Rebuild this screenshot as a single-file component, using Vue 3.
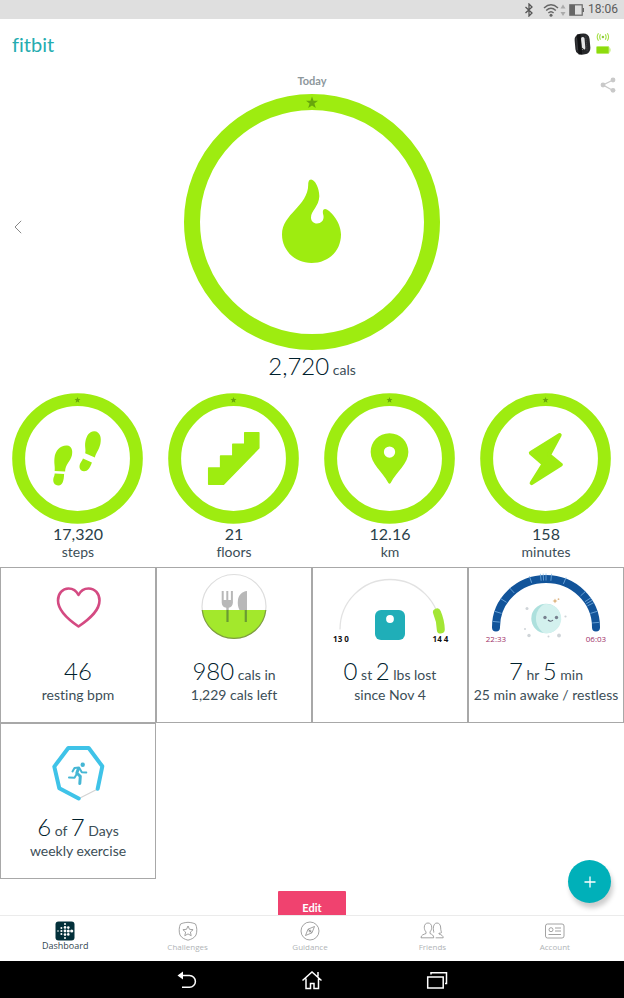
<script setup>
const goals = [
  { id: 'steps', value: '17,320', unit: 'steps' },
  { id: 'floors', value: '21', unit: 'floors' },
  { id: 'km', value: '12.16', unit: 'km' },
  { id: 'minutes', value: '158', unit: 'minutes' }
]

const tiles = [
  { id: 'heart', main: [['46', '']], sub: 'resting bpm' },
  { id: 'food', main: [['980', 'cals in']], sub: '1,229 cals left' },
  { id: 'weight', main: [['0', 'st'], ['2', 'lbs lost']], sub: 'since Nov 4' },
  { id: 'sleep', main: [['7', 'hr'], ['5', 'min']], sub: '25 min awake / restless' },
  { id: 'exercise', main: [['6', 'of'], ['7', 'Days']], sub: 'weekly exercise' }
]

const tabs = ['Dashboard', 'Challenges', 'Guidance', 'Friends', 'Account']

// Restless moments along the sleep arc, in degrees from its left end
const restless = [6, 17, 32, 47, 72, 84, 87, 90, 96, 112, 138, 147, 150, 153, 163, 175]

// Dots of the brand mark: [x, y, radius]
const dots = [
  [10, 3, 1], [10, 17, 1], [3, 10, 0.8],
  [6.4, 7, 1], [6.4, 10, 1.1], [6.4, 13, 1],
  [10, 6.4, 1.3], [10, 10, 1.4], [10, 13.6, 1.3],
  [13.3, 6.6, 1.3], [13.3, 10, 1.5], [13.3, 13.4, 1.3],
  [16.7, 10, 1.6]
]
</script>

<template>
  <div class="app">
    <div class="status">
      <svg class="status-bt" viewBox="0 0 10 14" aria-hidden="true"><path d="M1.500 4 8 10 5 13V1l3 3-6.500 6" /></svg>
      <svg class="status-wifi" viewBox="0 0 24 16" aria-hidden="true">
        <path class="waves" d="M1 6Q8 -.5 15 6M3.200 8.500Q8 4 12.800 8.500M5.400 11Q8 8.500 10.600 11" />
        <circle cx="8" cy="13.300" r="1.500" />
        <path class="faint" d="M17.500 6.500 20 2.500l2.500 4zM17.500 10 20 14l2.500-4z" />
      </svg>
      <svg class="status-battery" viewBox="0 0 16 12" aria-hidden="true">
        <rect class="case" x=".8" y=".8" width="12.400" height="10.400" />
        <rect x="1" y="1" width="5" height="10" />
        <rect x="13.500" y="4" width="1.500" height="4" />
      </svg>
      <span class="clock">18:06</span>
    </div>

    <header class="header">
      <h1 class="logo">fitbit</h1>
      <button class="plain device" type="button" aria-label="Tracker">
        <svg viewBox="0 0 38 24" width="38" height="24" aria-hidden="true">
          <g transform="rotate(-5 10 12)">
            <rect x="2" y="1.500" width="15" height="21" rx="6" fill="#27282b" />
            <rect x="8.500" y="5" width="3.500" height="13" rx="1.700" fill="#e4e5e7" />
            <path d="M6.500 2v20" stroke="#111214" stroke-width="3.500" fill="none" />
            <path d="M13.500 4v16M4 6v11" stroke="#55575b" stroke-width=".8" stroke-dasharray="1 1" fill="none" />
            <path d="M8.500 16l2 2-1 2" stroke="#222" fill="none" />
          </g>
          <g fill="none" stroke="#a6e04a" stroke-width="1.100">
            <path d="M27.500 2.300q-1.700 2.700 0 5.400M25.500 1.300q-2.600 3.700 0 7.400M32.300 2.300q1.700 2.700 0 5.400M34.300 1.300q2.600 3.700 0 7.400" />
          </g>
          <circle cx="29.900" cy="5" r="1.200" fill="#8cc93a" />
          <rect x="23.500" y="14.500" width="12.500" height="7" rx="1" fill="#8edb0d" stroke="#b9ec6a" />
          <rect x="36.500" y="16.500" width="1" height="3" fill="#b9ec6a" />
        </svg>
      </button>
    </header>

    <main class="content">
      <section class="hero">
        <button class="plain prev" type="button" aria-label="Previous day">
          <svg viewBox="0 0 8 14" width="8" height="14" aria-hidden="true"><path d="M7.200 .8 1 7l6.200 6.200" /></svg>
        </button>
        <div class="hero-main">
          <h2 class="day">Today</h2>
          <svg class="hero-ring" viewBox="0 0 256 256" aria-hidden="true">
            <circle class="ring" cx="128" cy="128" r="120" stroke-width="16" />
            <path class="star" d="M128 2.500l1.500 4.200 4.500.100-3.600 2.700 1.400 4.500-3.800-2.600-3.800 2.600 1.400-4.500-3.600-2.700 4.500-.100z" />
            <path class="glyph" d="M125.500 86c4-3 10 7 9.800 16.500C135 112 127 117 127 123.500c0 3.500 2.500 6 6 6 5 0 7.600-4 6.200-9-.8-3-.3-5.500 2-5.500 3.500 0 15.800 12 15.800 25.500C157 157 144.500 169 127.500 169S98 156 98 140.500C98 120 124 112 124.200 91c0-2 .2-4 1.300-5z" />
          </svg>
          <p class="hero-value"><span class="big">2,720</span> cals</p>
        </div>
        <button class="plain share" type="button" aria-label="Share">
          <svg viewBox="0 0 16 16" width="16" height="16" aria-hidden="true">
            <path d="M13 3 3 8l10 5.500" /><circle cx="13" cy="3" r="2.400" /><circle cx="3" cy="8" r="2.400" /><circle cx="13" cy="13.300" r="2.400" />
          </svg>
        </button>
      </section>

      <section class="goals">
        <div v-for="g in goals" :key="g.id" class="goal">
          <svg class="goal-ring" viewBox="0 0 132 132" aria-hidden="true">
            <circle class="ring" cx="66" cy="66" r="59.300" stroke-width="13" />
            <path class="star" d="M66 4l.800 2 2.200.100-1.700 1.400.6 2.200-1.900-1.200-1.900 1.200.6-2.200L63 6.100l2.200-.100z" />
            <g v-if="g.id === 'steps'" class="glyph">
              <path d="M83 38.500c5.500.3 7.500 6 6 13-1.300 6-4.500 9-5.500 13.500l-9.800-4.200c1-4-.7-6.500.2-11.800 1.200-6.500 4.500-10.700 9.100-10.500z" />
              <path d="M71.500 66l9 4c-2 6-4.500 9-8 8.800-4-.3-5.300-3.800-4-7.300.7-2 2-2.500 3-5.500z" />
              <path d="M55.500 53c4.500.5 6 5 4.800 10-1.400 6-6.600 9-6.800 16l-10.500-.5c.5-5-.8-7-.2-13C43.500 58 49 52.500 55.500 53z" />
              <path d="M43 81l9.500.7c-.3 7-1.500 11.300-5.500 11.500-4.200.2-6-3.500-5.300-7 .3-2 1.200-2.700 1.300-5.200z" />
            </g>
            <path v-else-if="g.id === 'floors'" class="glyph floors" d="M41 92V75.500h12V63.500h12.300V51.500h12V40H91.500v15.500L56 92z" />
            <path v-else-if="g.id === 'km'" class="glyph" fill-rule="evenodd" d="M66 40.500c11 0 19 8.500 19 19 0 12-12 20-17.700 30.800q-1.300 2-2.600 0C59 79.500 47 71.500 47 59.500c0-10.500 8-19 19-19zm0 13.300a5.700 5.700 0 1 0 0 11.400 5.700 5.700 0 0 0 0-11.400z" />
            <path v-else class="glyph bolt" d="M80.300 42.300 51.200 60.500 64 71.500 52 90.800 81.500 72.200 69.500 62.500z" />
          </svg>
          <p class="goal-value">{{ g.value }}</p>
          <p class="goal-unit">{{ g.unit }}</p>
        </div>
      </section>

      <section class="tiles">
        <article v-for="t in tiles" :key="t.id" class="tile">
          <svg class="tile-art" viewBox="1 1 154 84" aria-hidden="true">
            <path v-if="t.id === 'heart'" d="M78.500 59.500C66 51 58 43 58 33.500c0-7 4.500-12 10.500-12 4.500 0 8 2.500 10 6.500 2-4 5.500-6.500 10-6.500 6.500 0 11 5 11 12 0 9.500-8.500 17.500-21 26z" fill="none" stroke="#d44a82" stroke-width="2.600" stroke-linejoin="round" />

            <g v-else-if="t.id === 'food'">
              <circle cx="78" cy="39.500" r="32" fill="#fff" stroke="#dedede" stroke-width="1.200" />
              <path d="M46.200 43a32 32 0 0 0 63.600 0z" fill="#a3e82c" />
              <path d="M46.200 43a32 32 0 0 0 63.600 0" fill="none" stroke="#7d9e3c" stroke-width="1.200" />
              <path d="M65.700 24h2v9h2.600v-9h2v9h2.600v-9h2v11.500c0 3-2 5-4.200 5.300V43h-2.400v-2.200c-2.700-.3-4.600-2.300-4.600-5.300z" fill="#b8b8b8" />
              <path d="M91 24v19h-7.500c-1.500-3-2-6-1.600-9.500C82.400 28 86 24.500 91 24z" fill="#b8b8b8" />
              <path d="M71.500 43v12M89.800 43v12" stroke="#6a9c32" stroke-width="2.200" fill="none" />
            </g>

            <g v-else-if="t.id === 'weight'">
              <path d="M28 62.500a50 50 0 0 1 100 0" fill="none" stroke="#e2e2e2" stroke-width="1.300" />
              <path d="M125 45.500Q128.500 53.500 128.800 62.500" fill="none" stroke="#a3e635" stroke-width="8" stroke-linecap="round" />
              <rect x="63" y="43" width="30" height="30" rx="6" fill="#20aeb8" />
              <circle cx="78" cy="52" r="3.900" fill="#fff" />
              <text class="tiny black" x="29" y="75">13 0</text>
              <text class="tiny black" x="128.500" y="75">14 4</text>
            </g>

            <g v-else-if="t.id === 'sleep'">
              <path d="M28 60.500v-.5a50 48 0 0 1 100 0v.5" fill="none" stroke="#12549a" stroke-width="8" stroke-linecap="round" />
              <g stroke="#7fb6e6" stroke-width=".7">
                <path v-for="a in restless" :key="a" d="M24.500 60h7" :transform="`rotate(${a} 78 60)`" />
              </g>
              <circle cx="78" cy="51.500" r="14.700" fill="#ade0dd" />
              <path d="M76 37.300a14.600 14.600 0 1 1-1 28.500Q67 59 68 50q1-9 8-12.700z" fill="#d3f1ee" />
              <circle cx="77" cy="50.500" r="1.700" fill="#77808f" /><circle cx="88.500" cy="50.500" r="1.700" fill="#77808f" />
              <path d="M80 53q2.700 2.600 5 0" fill="none" stroke="#5d6474" stroke-width="1.100" />
              <g fill="#cfd4d8"><circle cx="61" cy="68.500" r="1.700" /><circle cx="91" cy="68.500" r="1.900" /><circle cx="80.500" cy="69.500" r="1" /><circle cx="97.500" cy="49.500" r="1.100" /><circle cx="59" cy="41.500" r="1.500" /><circle cx="57" cy="62" r="1" /></g>
              <path d="M87 31.500l.8 1.700 1.700.8-1.700.8-.8 1.700-.8-1.700-1.700-.8 1.700-.8z" fill="#ddb47f" /><circle cx="90.500" cy="32.200" r=".9" fill="#e0b98c" />
              <text class="tiny plum" x="28" y="75">22:33</text>
              <text class="tiny plum" x="128" y="75">06:03</text>
            </g>

            <g v-else fill="none" stroke="#3fc3e8" stroke-linecap="round" stroke-linejoin="round">
              <path d="M97.700 66 79 75.500" stroke="#d3d3d3" stroke-width="1.200" />
              <path d="M97.700 65.700 102.300 43.300 88.700 25H68.300L54.300 43.600 59.300 65.300 78.700 75.500" stroke-width="4" />
              <circle cx="82.700" cy="41.800" r="2.200" fill="#45b6d4" stroke="none" />
              <g stroke="#45b6d4" stroke-width="2">
                <path d="M72.500 48.500 74.500 45l4.500-.5 2.800 4.800 4.500.2" />
                <path d="M69 54.500l5.500.3 2.500-4.300" />
                <path d="M78.500 45.500 76.800 50l3.500 3.300-.5 7.200" stroke-width="3" stroke-linejoin="round" />
              </g>
            </g>
          </svg>
          <p class="tile-main">
            <template v-for="(m, i) in t.main" :key="i"><span class="big">{{ m[0] }}</span>{{ ' ' + m[1] + ' ' }}</template>
          </p>
          <p class="tile-sub">{{ t.sub }}</p>
        </article>
      </section>

      <button class="edit" type="button">Edit</button>
      <button class="fab" type="button" aria-label="Add">
        <svg viewBox="0 0 12 12" width="12" height="12" aria-hidden="true"><path d="M6 .5v11M.5 6h11" /></svg>
      </button>
    </main>

    <nav class="tabs">
      <a v-for="(t, i) in tabs" :key="t" href="#" class="tab" :class="{ active: i === 0 }">
        <svg class="tab-icon" viewBox="0 0 24 20" aria-hidden="true">
          <g v-if="i === 0" transform="translate(2)">
            <rect x=".5" y=".5" width="19" height="19" rx="3" fill="#03303a" stroke="none" />
            <circle v-for="(d, k) in dots" :key="k" :cx="d[0]" :cy="d[1]" :r="d[2]" fill="#fff" stroke="none" />
          </g>
          <template v-else-if="i === 1">
            <path d="M12 1.300c3 .2 5.500.8 7.500 1.700 1.500 3 1.800 7.500.5 11-1.500 2.800-4.500 4.300-8 5.200-3.500-.9-6.500-2.400-8-5.200-1.300-3.500-1-8 .5-11 2-.9 4.500-1.500 7.500-1.700z" />
            <path d="M12 5l1.500 3.300 3.600.4-2.700 2.400.8 3.600-3.200-1.800-3.200 1.800.8-3.600L6.900 8.700l3.600-.4z" />
          </template>
          <template v-else-if="i === 2">
            <circle cx="12" cy="10" r="9" /><path d="M16.500 5.500 14 11.800 7.500 14.500 10 8.200zM10 8.200l4 3.600" /><circle cx="12" cy="10" r="1" />
          </template>
          <template v-else-if="i === 3">
            <path d="M8 2c-2.300 0-3.700 1.800-3.700 4.200 0 1.800.5 3.400 1.700 4.700v1.600c-2.500 1-5 1.500-5 4.300h12.700c0-2.800-1.700-3.300-3.700-4.300v-1.600c1.200-1.300 1.700-2.900 1.700-4.700C11.700 3.800 10.300 2 8 2z" />
            <path d="M13.700 11.600c.4-1.200-.5-1.600-.4-4.300C13.400 4 14.800 2 17 2s3.700 2 3.700 5c0 2.300.7 3.500.7 4.700-.8.600-1.800.6-2.400.3v1c2.200.8 4.200 1.500 4.200 3.800h-7.500" />
          </template>
          <template v-else>
            <rect x="2.500" y="3" width="18.500" height="14" rx="2" /><circle cx="8" cy="8.700" r="2" /><path d="M12 7h6M12 10h6M5.500 13.500H18" />
          </template>
        </svg>
        <span class="tab-label">{{ t }}</span>
      </a>
    </nav>

    <div class="system">
      <button class="plain" type="button" aria-label="Back">
        <svg viewBox="0 0 22 20" width="22" height="20" aria-hidden="true"><path d="M3 5.500h10.500a5.900 5.900 0 0 1 0 11.800H6" /><path d="M7 1.500v8L1.500 5.500z" fill="#fff" stroke="none" /></svg>
      </button>
      <button class="plain" type="button" aria-label="Home">
        <svg viewBox="0 0 22 20" width="22" height="20" aria-hidden="true"><path d="M1.500 10.500 11 2l9.500 8.500M5 8.500v10h4.500v-5h3.500v5H17.500v-10M17 6.500V2" /></svg>
      </button>
      <button class="plain" type="button" aria-label="Recent apps">
        <svg viewBox="0 0 22 20" width="22" height="20" aria-hidden="true"><rect x="1.700" y="7" width="15.500" height="11" /><path d="M5 4.500V2.800h15.500v10.700h-1.500" /></svg>
      </button>
    </div>
  </div>
</template>

<style>
body {
  margin: 0;
  background: #fff;
}
</style>

<style scoped>
* {
  box-sizing: border-box;
}
.app {
  display: flex;
  flex-direction: column;
  height: 100vh;
  font-family: Lato, "Open Sans", sans-serif;
  font-size: 14px;
  font-variant-ligatures: none;
  color: #3c4e57;
}
h1, h2, p {
  margin: 0;
  font-weight: 400;
}
svg {
  display: block;
}
.plain {
  display: flex;
  align-items: center;
  justify-content: center;
  padding: 0;
  border: 0;
  background: none;
}
.status {
  display: flex;
  align-items: center;
  justify-content: flex-end;
  height: 19px;
  padding-right: 6px;
  background: #dfdfdf;
  color: #5c5c5c;
  font: 12px/19px Roboto, sans-serif;
  flex: none;
}
.status svg {
  fill: #666;
}
.status-bt {
  width: 10px;
  height: 14px;
  margin-right: 9px;
}
.status-bt path {
  fill: none;
  stroke: #555;
  stroke-width: 1.3;
}
.status-wifi {
  width: 24px;
  height: 16px;
  margin-right: 2px;
}
.status .waves {
  fill: none;
  stroke: #666;
  stroke-width: 1.5;
}
.status .faint {
  fill: #aaa;
}
.status-battery {
  width: 16px;
  height: 12px;
  margin-right: 3px;
}
.status-battery .case {
  fill: none;
  stroke: #666;
  stroke-width: 1.2;
}
.header {
  display: flex;
  align-items: center;
  justify-content: space-between;
  height: 50px;
  padding: 0 13px 0 12px;
  flex: none;
}
.logo {
  font-size: 20px;
  line-height: 24px;
  color: #25acb0;
}
.content {
  position: relative;
  flex: 1;
  min-height: 0;
  overflow: hidden;
}
.hero {
  display: grid;
  grid-template-columns: 1fr minmax(0, 256px) 1fr;
  align-items: center;
  text-align: center;
}
.prev {
  justify-self: start;
  padding: 0 14px;
}
.prev path {
  fill: none;
  stroke: #888;
}
.share {
  align-self: start;
  justify-self: end;
  padding: 8px 8px 8px 0;
}
.share path {
  fill: none;
  stroke: #c9c9c9;
  stroke-width: 1.3;
}
.share circle {
  fill: #c9c9c9;
}
.day {
  padding-bottom: 2px;
  font-size: 11px;
  line-height: 23px;
  font-weight: 700;
  color: #8d979c;
}
.hero-ring {
  width: 100%;
}
.ring {
  fill: none;
  stroke: #9eec10;
}
.glyph {
  fill: #9eec10;
}
.floors, .bolt {
  stroke: #9eec10;
  stroke-linejoin: round;
}
.floors {
  stroke-width: 1.5;
}
.bolt {
  stroke-width: 4;
}
.star {
  fill: #68a60b;
}
.hero-value {
  line-height: 31px;
}
.big {
  font-size: 24px;
  font-weight: 300;
  color: #00202c;
}
.goals {
  display: grid;
  grid-template-columns: repeat(4, 1fr);
  padding: 8px 0 7px;
  text-align: center;
}
.goal-ring {
  width: 84%;
  margin: 0 auto;
}
.goal-value {
  font-size: 16px;
  line-height: 20px;
  color: #2a3f4a;
}
.goal-unit {
  line-height: 16px;
}
.tiles {
  display: grid;
  grid-template-columns: repeat(4, 1fr);
  text-align: center;
}
.tile {
  aspect-ratio: 1;
  min-width: 0;
  border: 1px solid #a8a8a8;
  white-space: nowrap;
}
.tile-art {
  width: 100%;
}
.tile-main {
  padding-top: 6px;
  line-height: 26px;
}
.tile-sub {
  line-height: 14px;
}
.tiny {
  font: 700 8px "Open Sans", sans-serif;
  text-anchor: middle;
}
.black {
  fill: #111;
}
.plum {
  font-weight: 400;
  fill: #a03068;
}
.edit {
  display: block;
  width: 68px;
  height: 34px;
  margin: 12px auto 0;
  padding: 0;
  border: 0;
  border-radius: 1px;
  background: #f0426f;
  color: #fff;
  font: 700 11px/16px Lato, sans-serif;
}
.fab {
  position: absolute;
  right: 13px;
  bottom: 12px;
  display: flex;
  align-items: center;
  justify-content: center;
  width: 43px;
  height: 43px;
  padding: 0;
  border: 0;
  border-radius: 50%;
  background: #00b0b9;
  box-shadow: 2px 5px 5px rgba(0, 0, 0, 0.2);
}
.fab path {
  stroke: #fff;
  stroke-width: 1.3;
}
.tabs {
  display: grid;
  grid-template-columns: repeat(5, 1fr);
  height: 46px;
  padding: 5px 8px 0 4px;
  border-top: 1px solid #ebebeb;
  background: #fff;
  flex: none;
}
.tab {
  display: flex;
  flex-direction: column;
  align-items: center;
  color: #b0b4b6;
  font: 8px/12px "Open Sans", sans-serif;
  text-decoration: none;
}
.tab-icon {
  width: 24px;
  height: 20px;
  fill: none;
  stroke: #8b8b8b;
  stroke-width: 0.8;
}
.active {
  color: #33464f;
  font-size: 9px;
  line-height: 10px;
}
.system {
  display: grid;
  grid-template-columns: repeat(5, 1fr);
  height: 37px;
  background: #000;
  flex: none;
}
.system button:first-child {
  grid-column: 2;
}
.system svg {
  fill: none;
  stroke: #fff;
  stroke-width: 1.5;
}
</style>
